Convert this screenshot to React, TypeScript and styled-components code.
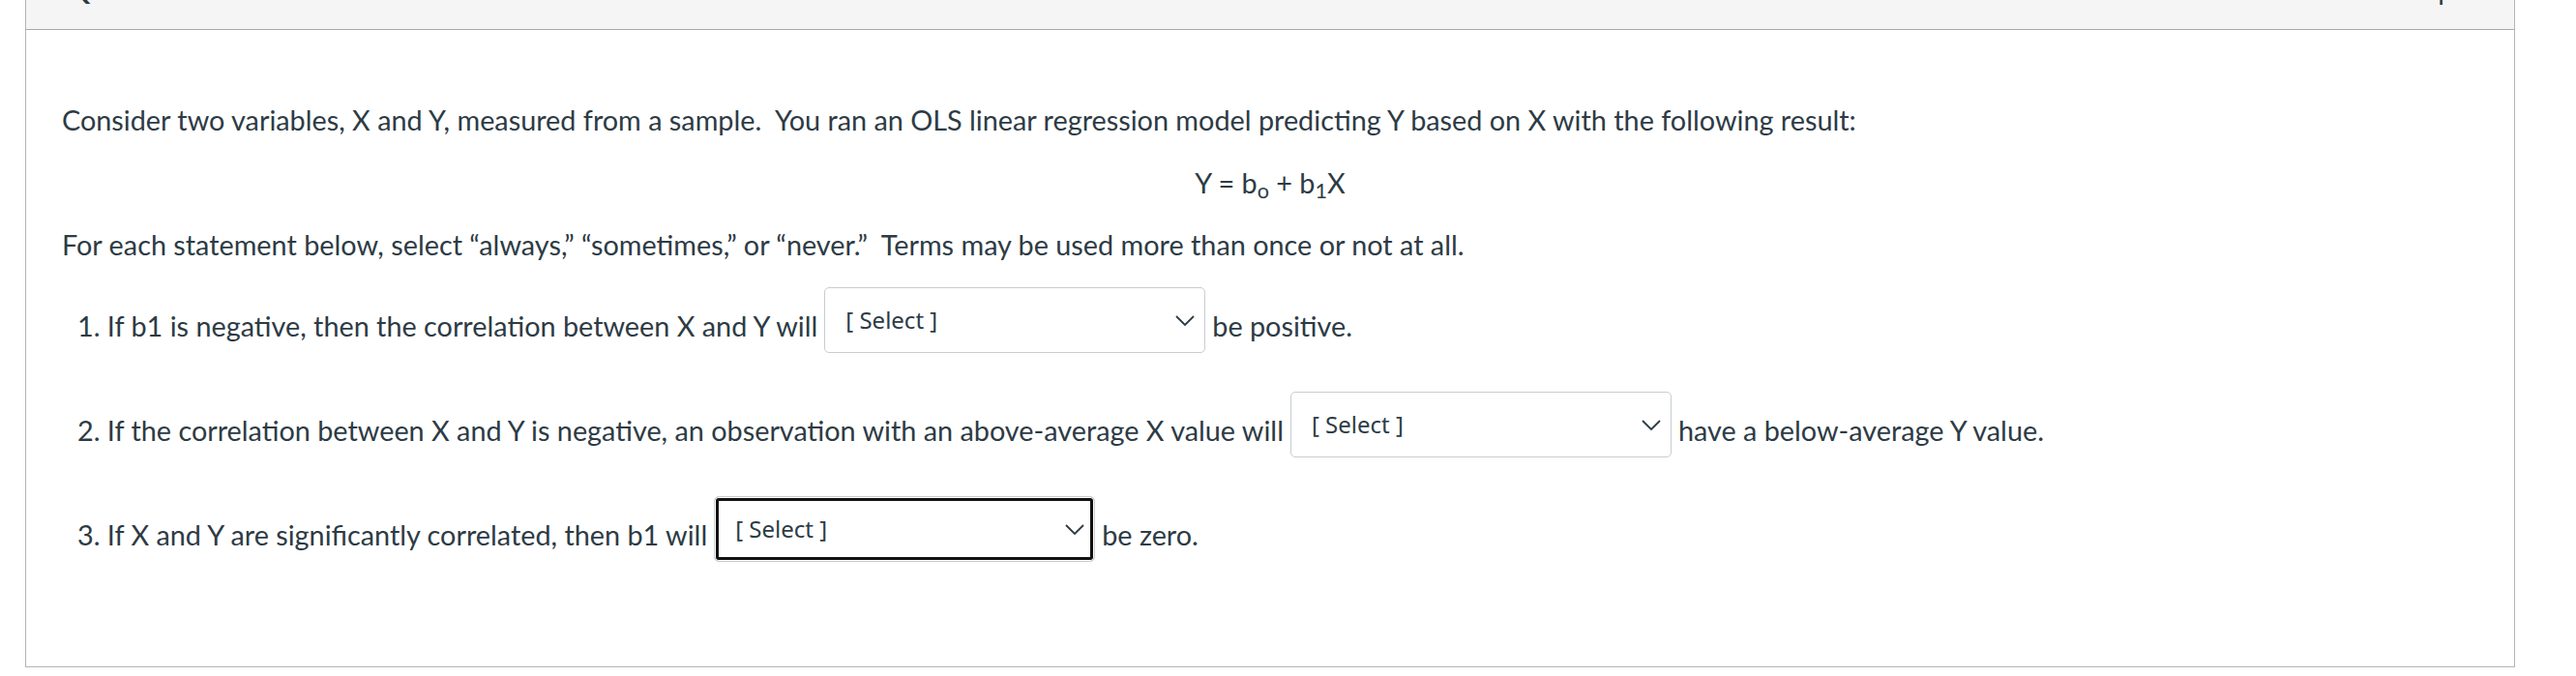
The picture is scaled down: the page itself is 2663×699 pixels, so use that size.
import styled, { createGlobalStyle } from 'styled-components';

const GlobalStyle = createGlobalStyle`
  html, body {
    margin: 0;
    padding: 0;
    background: #fff;
    overflow: hidden;
  }
  body {
    font-family: Lato, "Liberation Sans", sans-serif;
    color: #2d3b45;
  }
`;

const ChevronDown = () => (
  <svg width="20" height="11" viewBox="0 0 20 11" fill="none">
    <path d="M1 1 L10 10 L19 1" stroke="#2d3b45" strokeWidth="1.8" />
  </svg>
);

const AnswerSelect = ({ focused }: { focused?: boolean }) => (
  <SelectBox $focused={focused} role="combobox" aria-expanded="false">
    <SelectText>[ Select ]</SelectText>
    <ChevronDown />
  </SelectBox>
);

const App = () => {
  return (
    <Page>
      <GlobalStyle />
      <QuestionCard>
        <QuestionHeader>
          <QuestionName>Question 3</QuestionName>
          <Points>1 pts</Points>
        </QuestionHeader>

        <QuestionBody>
          <Paragraph $after={29}>
            Consider two variables, X and Y, measured from a sample.{'\u00a0'} You ran an OLS linear regression model predicting Y based on X with the following result:
          </Paragraph>
          <Equation>
            Y = b<sub>o</sub> + b<sub>1</sub>X
          </Equation>
          <Paragraph $after={26}>
            For each statement below, select “always,” “sometimes,” or “never.”{'\u00a0'} Terms may be used more than once or not at all.
          </Paragraph>

          <Statements>
            <Statement>
              <Phrase>1. If b1 is negative, then the correlation between X and Y will</Phrase>
              <AnswerSelect />
              <Phrase>be positive.</Phrase>
            </Statement>
            <Statement>
              <Phrase>2. If the correlation between X and Y is negative, an observation with an above-average X value will</Phrase>
              <AnswerSelect />
              <Phrase>have a below-average Y value.</Phrase>
            </Statement>
            <Statement>
              <Phrase>3. If X and Y are significantly correlated, then b1 will</Phrase>
              <AnswerSelect focused />
              <Phrase>be zero.</Phrase>
            </Statement>
          </Statements>
        </QuestionBody>
      </QuestionCard>
    </Page>
  );
};

const Page = styled.div`
  padding: 0 63px 0 26px;
`;

const QuestionCard = styled.div`
  margin-top: -43px;
  border: 1px solid #b4b4b4;
  background: #fff;
`;

const QuestionHeader = styled.div`
  box-sizing: border-box;
  height: 73px;
  padding: 13px 40px 0 43px;
  background: #f5f5f5;
  border-bottom: 1px solid #a9a9a9;
  display: flex;
  justify-content: space-between;
  font-size: 28.8px;
  line-height: 36px;
`;

const QuestionName = styled.span`
  font-weight: bold;
`;

const Points = styled.span`
  font-weight: normal;
`;

const QuestionBody = styled.div`
  padding: 75px 37px 108px 37px;
  font-size: 28.8px;
  line-height: 36px;
`;

const Paragraph = styled.p<{ $after: number }>`
  margin: 0 0 ${(p) => p.$after}px;
`;

const Equation = styled.p`
  margin: 0 0 28px;
  text-align: center;

  sub {
    font-size: 0.75em;
    line-height: 0;
    vertical-align: -0.25em;
  }
`;

const Statements = styled.div`
  display: flex;
  flex-direction: column;
  gap: 40px;
  padding-left: 16px;
`;

const Statement = styled.div`
  display: flex;
  align-items: center;
  gap: 7px;
  white-space: nowrap;
`;

const Phrase = styled.span`
  padding-top: 11px;
`;

const SelectBox = styled.div<{ $focused?: boolean }>`
  box-sizing: border-box;
  width: 394px;
  height: 68px;
  flex-shrink: 0;
  display: flex;
  align-items: center;
  justify-content: space-between;
  padding: 0 10px 0 21px;
  background: #fff;
  border: 1px solid #c7cdd1;
  border-radius: 5px;
  box-shadow: ${(p) =>
    p.$focused ? 'inset 0 0 0 1px #fff, inset 0 0 0 4px #111' : 'none'};
  font-family: "Noto Sans", "Open Sans", sans-serif;
  font-size: 24px;
  line-height: 36px;
  color: #2d3b45;
`;

const SelectText = styled.span`
  margin-top: -1px;
`;

export default App;
